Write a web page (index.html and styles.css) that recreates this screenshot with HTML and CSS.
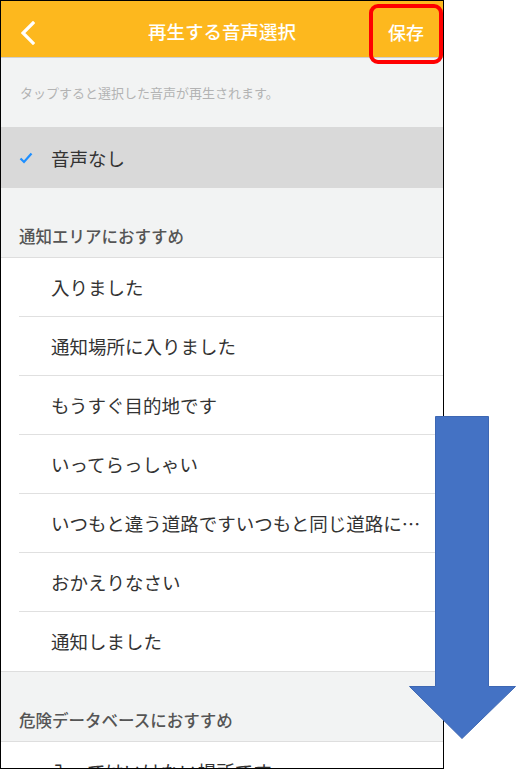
FILE: index.html
```html
<!DOCTYPE html>
<html lang="ja">
<head>
<meta charset="utf-8">
<title>再生する音声選択</title>
<link rel="stylesheet" href="styles.css">
</head>
<body>
<div class="phone">
  <header class="navbar">
    <span class="back">
      <svg width="14" height="24" viewBox="0 0 14 24"><polyline points="12,2 2,12 12,22" fill="none" stroke="#fff" stroke-width="3.2" stroke-linecap="square"/></svg>
    </span>
    <span class="title">再生する音声選択</span>
    <span class="save">保存</span>
  </header>
  <div class="hint">タップすると選択した音声が再生されます。</div>
  <div class="selected">
    <span class="check">
      <svg width="14" height="12" viewBox="0 0 14 12"><polyline points="1.5,6.5 5,10 12.5,1.5" fill="none" stroke="#1e8fff" stroke-width="2.2"/></svg>
    </span>
    <span class="label">音声なし</span>
  </div>
  <div class="section">通知エリアにおすすめ</div>
  <ul class="list">
    <li class="item">入りました</li>
    <li class="item">通知場所に入りました</li>
    <li class="item">もうすぐ目的地です</li>
    <li class="item">いってらっしゃい</li>
    <li class="item">いつもと違う道路ですいつもと同じ道路に入りました</li>
    <li class="item">おかえりなさい</li>
    <li class="item last">通知しました</li>
  </ul>
  <div class="section">危険データベースにおすすめ</div>
  <ul class="list">
    <li class="item">入ってはいけない場所です</li>
  </ul>
  <div class="highlight"></div>
</div>
<svg class="arrow" width="110" height="330" viewBox="0 0 110 330">
  <polygon points="26.5,0.5 79.5,0.5 79.5,270.5 106.5,270.5 53,322.5 0.5,270.5 26.5,270.5" fill="#4472c4" stroke="#3d67b3" stroke-width="1"/>
</svg>
</body>
</html>
```

FILE: styles.css
```css
* { box-sizing: border-box; }

html, body {
  margin: 0;
  padding: 0;
  background: #ffffff;
}

body {
  position: relative;
  width: 516px;
  height: 770px;
  overflow: hidden;
  font-family: "Noto Sans CJK JP", "Noto Sans", sans-serif;
}

.phone {
  position: relative;
  width: 444px;
  height: 769px;
  border: 1px solid #000;
  background: #f2f3f3;
  overflow: hidden;
}

.navbar {
  height: 57px;
  background: #fdb81e;
  border-bottom: 1px solid #cfcfcf;
  display: flex;
  align-items: center;
  position: relative;
}

.back {
  position: absolute;
  left: 20px;
  top: 20px;
  display: flex;
}

.title {
  flex: 1;
  text-align: center;
  color: #fff;
  font-size: 18.5px;
  font-weight: 500;
  padding-top: 4px;
}

.save {
  position: absolute;
  right: 19px;
  top: 17px;
  color: #fff;
  font-size: 18px;
  font-weight: 500;
  line-height: 28px;
}

.hint {
  height: 69px;
  display: flex;
  align-items: center;
  padding-left: 19px;
  font-size: 13px;
  color: #b3b3b3;
}

.selected {
  height: 61px;
  background: #d9d9d9;
  display: flex;
  align-items: center;
}

.check {
  width: 50px;
  padding-left: 18px;
  display: flex;
}

.label {
  font-size: 18.5px;
  color: #333;
}

.section {
  height: 70px;
  display: flex;
  align-items: flex-end;
  padding: 0 0 9px 18px;
  font-size: 16.5px;
  font-weight: 500;
  color: #555;
  line-height: 24px;
  border-bottom: 1px solid #dedede;
}

.list {
  list-style: none;
  margin: 0;
  padding: 0;
  background: #fff;
}

.item {
  display: block;
  height: 59px;
  line-height: 58px;
  margin-left: 18px;
  padding: 0 19px 0 32px;
  border-bottom: 1px solid #e0e0e0;
  font-size: 18.5px;
  color: #333;
  white-space: nowrap;
  overflow: hidden;
  text-overflow: ellipsis;
}

.item.last {
  border-bottom: none;
}

.list + .section {
  height: 71px;
  border-top: 1px solid #dedede;
}

.highlight {
  position: absolute;
  left: 368px;
  top: 3px;
  width: 74px;
  height: 60px;
  border: 4px solid #ff0000;
  border-radius: 9px;
}

.arrow {
  position: absolute;
  left: 409px;
  top: 416px;
}
```
